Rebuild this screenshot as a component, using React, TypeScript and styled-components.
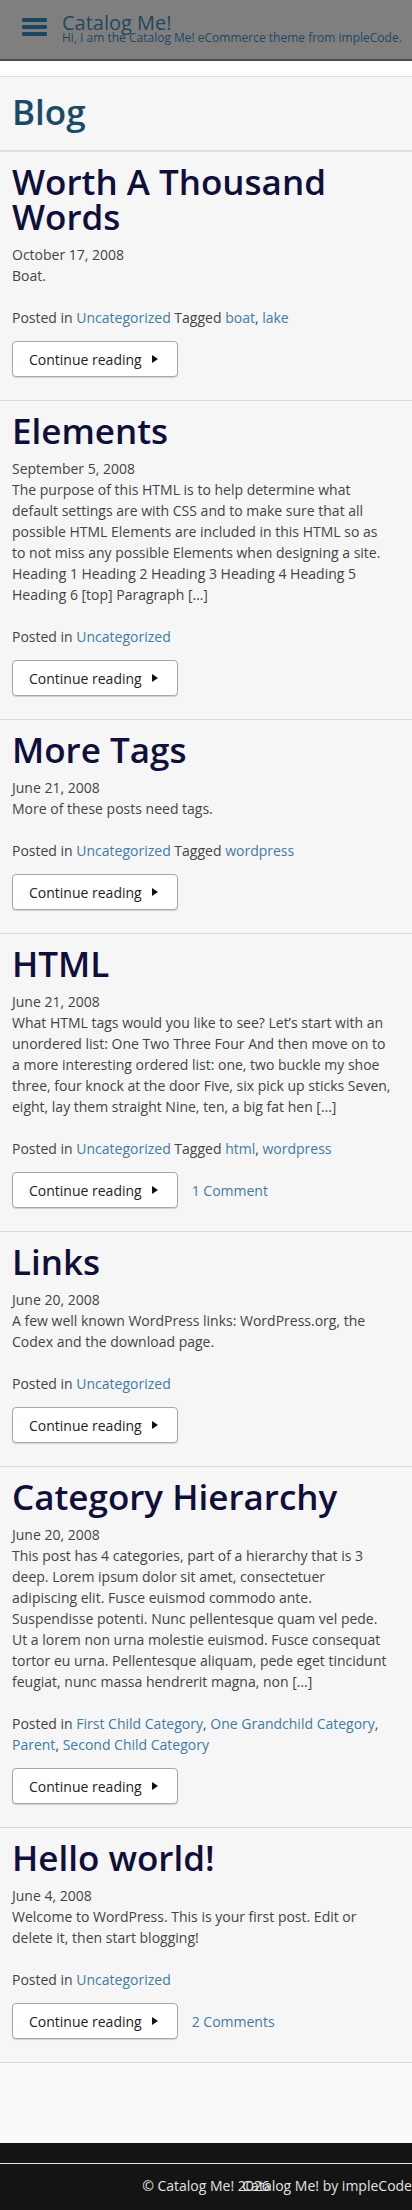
import React from 'react';
import styled, { createGlobalStyle } from 'styled-components';

type Post = {
  title: string;
  date: string;
  excerpt: string[];
  categories: string[];
  tags?: string[];
  comments?: string;
};

// excerpt lines follow the wrapping of the theme at this width
const posts: Post[] = [
  {
    title: 'Worth A Thousand Words',
    date: 'October 17, 2008',
    excerpt: ['Boat.'],
    categories: ['Uncategorized'],
    tags: ['boat', 'lake'],
  },
  {
    title: 'Elements',
    date: 'September 5, 2008',
    excerpt: [
      'The purpose of this HTML is to help determine what',
      'default settings are with CSS and to make sure that all',
      'possible HTML Elements are included in this HTML so as',
      'to not miss any possible Elements when designing a site.',
      'Heading 1 Heading 2 Heading 3 Heading 4 Heading 5',
      'Heading 6 [top] Paragraph […]',
    ],
    categories: ['Uncategorized'],
  },
  {
    title: 'More Tags',
    date: 'June 21, 2008',
    excerpt: ['More of these posts need tags.'],
    categories: ['Uncategorized'],
    tags: ['wordpress'],
  },
  {
    title: 'HTML',
    date: 'June 21, 2008',
    excerpt: [
      'What HTML tags would you like to see? Let’s start with an',
      'unordered list: One Two Three Four And then move on to',
      'a more interesting ordered list: one, two buckle my shoe',
      'three, four knock at the door Five, six pick up sticks Seven,',
      'eight, lay them straight Nine, ten, a big fat hen […]',
    ],
    categories: ['Uncategorized'],
    tags: ['html', 'wordpress'],
    comments: '1 Comment',
  },
  {
    title: 'Links',
    date: 'June 20, 2008',
    excerpt: [
      'A few well known WordPress links: WordPress.org, the',
      'Codex and the download page.',
    ],
    categories: ['Uncategorized'],
  },
  {
    title: 'Category Hierarchy',
    date: 'June 20, 2008',
    excerpt: [
      'This post has 4 categories, part of a hierarchy that is 3',
      'deep. Lorem ipsum dolor sit amet, consectetuer',
      'adipiscing elit. Fusce euismod commodo ante.',
      'Suspendisse potenti. Nunc pellentesque quam vel pede.',
      'Ut a lorem non urna molestie euismod. Fusce consequat',
      'tortor eu urna. Pellentesque aliquam, pede eget tincidunt',
      'feugiat, nunc massa hendrerit magna, non […]',
    ],
    categories: ['First Child Category', 'One Grandchild Category', 'Parent', 'Second Child Category'],
  },
  {
    title: 'Hello world!',
    date: 'June 4, 2008',
    excerpt: [
      'Welcome to WordPress. This is your first post. Edit or',
      'delete it, then start blogging!',
    ],
    categories: ['Uncategorized'],
    comments: '2 Comments',
  },
];

const GlobalStyle = createGlobalStyle`
  html, body {
    margin: 0;
    padding: 0;
    background: #fafafa;
  }
  body {
    font-family: "Open Sans", "Liberation Sans", sans-serif;
    font-size: 14px;
    line-height: 21px;
    color: #444;
  }
`;

const Page = styled.div`
  min-height: 2210px;
  display: flex;
  flex-direction: column;
`;

const Masthead = styled.header`
  height: 61px;
  background: #7f7f7f;
  border-bottom: 2px solid #4a4a4a;
  display: flex;
  align-items: flex-start;
  gap: 15px;
  padding: 13px 0 0 22px;
  box-sizing: border-box;
`;

const Burger = styled.div`
  width: 25px;
  margin-top: 5px;
  display: flex;
  flex-direction: column;
  gap: 3px;
  span {
    display: block;
    height: 4px;
    border-radius: 1px;
    background: #1c4560;
  }
`;

const Branding = styled.div`
  display: flex;
  flex-direction: column;
  white-space: nowrap;
`;

const SiteTitle = styled.div`
  font-size: 20px;
  line-height: 20px;
  color: #1f4760;
`;

const Tagline = styled.div`
  font-size: 12px;
  line-height: 14px;
  margin-top: -2px;
  color: #1f4760;
`;

const Spacer = styled.div`
  height: 15px;
  background: #fff;
  border-bottom: 1px solid #dddddd;
`;

const Main = styled.main`
  background: #f6f6f6;
`;

const PageHeader = styled.div`
  padding: 12px 12px 16px;
  border-bottom: 2px solid #e0e0e0;
`;

const PageTitle = styled.h1`
  margin: 0;
  font-size: 35px;
  line-height: 45px;
  font-weight: 600;
  color: #1b4a68;
`;

const Article = styled.article`
  padding: 12px 12px 23px;
  border-bottom: 1px solid #d9d9d9;
`;

const EntryTitle = styled.h2`
  margin: 0 0 10px;
  font-size: 35px;
  line-height: 35px;
  font-weight: 600;
  color: #0f0f3c;
`;

const Meta = styled.div`
  color: #444;
`;

const Excerpt = styled.p`
  margin: 0 0 21px;
  color: #444;
  white-space: nowrap;
`;

const Footer = styled.div`
  color: #444;
`;

const Link = styled.a`
  color: #3e7ca3;
  text-decoration: none;
`;

const Actions = styled.div`
  margin-top: 13px;
  display: flex;
  align-items: center;
  gap: 14px;
`;

const MoreButton = styled.a`
  display: inline-flex;
  align-items: center;
  gap: 10px;
  height: 34px;
  padding: 0 19px 0 16px;
  background: #fff;
  border: 1px solid #a8a8a8;
  border-radius: 4px;
  box-shadow: 0 1px 1px rgba(0, 0, 0, 0.15);
  color: #222;
  font-size: 14px;
  text-decoration: none;
`;

const Arrow = styled.span`
  width: 0;
  height: 0;
  border-top: 4px solid transparent;
  border-bottom: 4px solid transparent;
  border-left: 6px solid #111;
`;

const BottomArea = styled.div`
  height: 80px;
  background: #fafafa;
`;

const SiteFooter = styled.footer`
  flex: 1;
  background: #141414;
  padding-top: 20px;
`;

const SiteInfo = styled.div`
  border-top: 1px solid #e6e6e6;
  padding-top: 11px;
  display: grid;
  color: #e2e2e2;
  font-size: 14px;
  line-height: 21px;
  white-space: nowrap;
  overflow: hidden;
`;

const Copy = styled.span<{ $align: 'center' | 'end' }>`
  grid-area: 1 / 1;
  justify-self: ${(p) => p.$align};
`;

const joinLinks = (items: string[]) =>
  items.map((item, i) => (
    <React.Fragment key={item}>
      <Link href="#">{item}</Link>
      {i < items.length - 1 ? ', ' : ''}
    </React.Fragment>
  ));

const PostItem = ({ post }: { post: Post }) => (
  <Article>
    <EntryTitle>{post.title}</EntryTitle>
    <Meta>{post.date}</Meta>
    <Excerpt>
      {post.excerpt.map((line, i) => (
        <React.Fragment key={i}>
          {i > 0 && <br />}
          {line}
        </React.Fragment>
      ))}
    </Excerpt>
    <Footer>
      Posted in {joinLinks(post.categories)}
      {post.tags && <> Tagged {joinLinks(post.tags)}</>}
    </Footer>
    <Actions>
      <MoreButton href="#">
        Continue reading <Arrow />
      </MoreButton>
      {post.comments && <Link href="#">{post.comments}</Link>}
    </Actions>
  </Article>
);

export default function App() {
  return (
    <Page>
      <GlobalStyle />
      <Masthead>
        <Burger>
          <span />
          <span />
          <span />
        </Burger>
        <Branding>
          <SiteTitle>Catalog Me!</SiteTitle>
          <Tagline>Hi, I am the Catalog Me! eCommerce theme from impleCode.</Tagline>
        </Branding>
      </Masthead>
      <Spacer />
      <Main>
        <PageHeader>
          <PageTitle>Blog</PageTitle>
        </PageHeader>
        {posts.map((p) => (
          <PostItem key={p.title} post={p} />
        ))}
      </Main>
      <BottomArea />
      <SiteFooter>
        <SiteInfo>
          <Copy $align="center">© Catalog Me! 2026</Copy>
          <Copy $align="end">Catalog Me! by impleCode</Copy>
        </SiteInfo>
      </SiteFooter>
    </Page>
  );
}
